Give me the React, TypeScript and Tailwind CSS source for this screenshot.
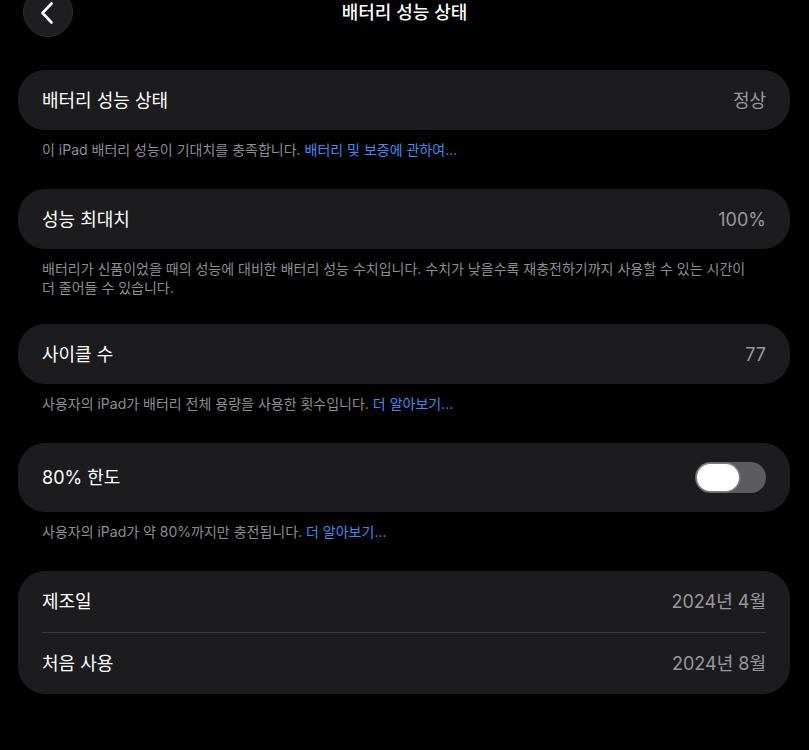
import React from 'react'

const font = { fontFamily: 'Inter, "Noto Sans CJK KR", sans-serif' }

function Card({ children, className = '' }: { children: React.ReactNode; className?: string }) {
  return <div className={`bg-[#1c1c1e] rounded-[27px] px-6 ${className}`}>{children}</div>
}

function Row({ label, value, h = 'h-[60px]' }: { label: string; value?: React.ReactNode; h?: string }) {
  return (
    <div className={`flex items-center justify-between ${h}`}>
      <span className="text-[18px] text-white">{label}</span>
      {typeof value === 'string' ? <span className="text-[18px] text-[#98989e]">{value}</span> : value}
    </div>
  )
}

function Footer({ children, mb = 'mb-[30px]', pr = 'pr-6' }: { children: React.ReactNode; mb?: string; pr?: string }) {
  return <p className={`pl-6 ${pr} pt-[10px] ${mb} text-[14px] leading-[19px] text-[#8d8d93]`}>{children}</p>
}

function Link({ children }: { children: React.ReactNode }) {
  return <span className="text-[#3f8cf5]">{children}</span>
}

function Toggle() {
  return (
    <div className="w-[71px] h-[31px] rounded-full bg-[#5c5c60] flex items-center px-[2px]">
      <div className="w-[42px] h-[27px] rounded-full bg-white shadow-[0_0_0_1.5px_rgba(150,150,155,0.6)]" />
    </div>
  )
}

export default function App() {
  return (
    <div className="min-h-[750px] bg-black overflow-hidden" style={font}>
      {/* Top bar */}
      <div className="relative -mt-[13px] h-[50px] flex items-center justify-center">
        <button className="absolute left-[23px] top-0 w-[50px] h-[50px] rounded-full bg-[#1e1e20] border border-[#2c2c2e] flex items-center justify-center">
          <svg width="14" height="22" viewBox="0 0 14 22" className="-ml-[3px] mt-[1px]">
            <path d="M11.5 1.5 L2.5 11 L11.5 20.5" fill="none" stroke="white" strokeWidth="2.6" strokeLinecap="round" strokeLinejoin="round" />
          </svg>
        </button>
        <h1 className="text-[18px] font-medium text-white">배터리 성능 상태</h1>
      </div>

      <div className="pl-[18px] pr-[19px] pt-[33px]">
        <Card>
          <Row label="배터리 성능 상태" value="정상" />
        </Card>
        <Footer>
          이 iPad 배터리 성능이 기대치를 충족합니다. <Link>배터리 및 보증에 관하여...</Link>
        </Footer>

        <Card>
          <Row label="성능 최대치" value="100%" />
        </Card>
        <Footer mb="mb-[27px]" pr="pr-[40px]">
          배터리가 신품이었을 때의 성능에 대비한 배터리 성능 수치입니다. 수치가 낮을수록 재충전하기까지 사용할 수 있는 시간이 더 줄어들 수 있습니다.
        </Footer>

        <Card>
          <Row label="사이클 수" value="77" />
        </Card>
        <Footer>
          사용자의 iPad가 배터리 전체 용량을 사용한 횟수입니다. <Link>더 알아보기...</Link>
        </Footer>

        <Card>
          <Row label="80% 한도" value={<Toggle />} h="h-[69px]" />
        </Card>
        <Footer>
          사용자의 iPad가 약 80%까지만 충전됩니다. <Link>더 알아보기...</Link>
        </Footer>

        <Card>
          <Row label="제조일" value="2024년 4월" h="h-[61px]" />
          <div className="h-px bg-[#3a3a3c]" />
          <Row label="처음 사용" value="2024년 8월" h="h-[61px]" />
        </Card>
      </div>
    </div>
  )
}
